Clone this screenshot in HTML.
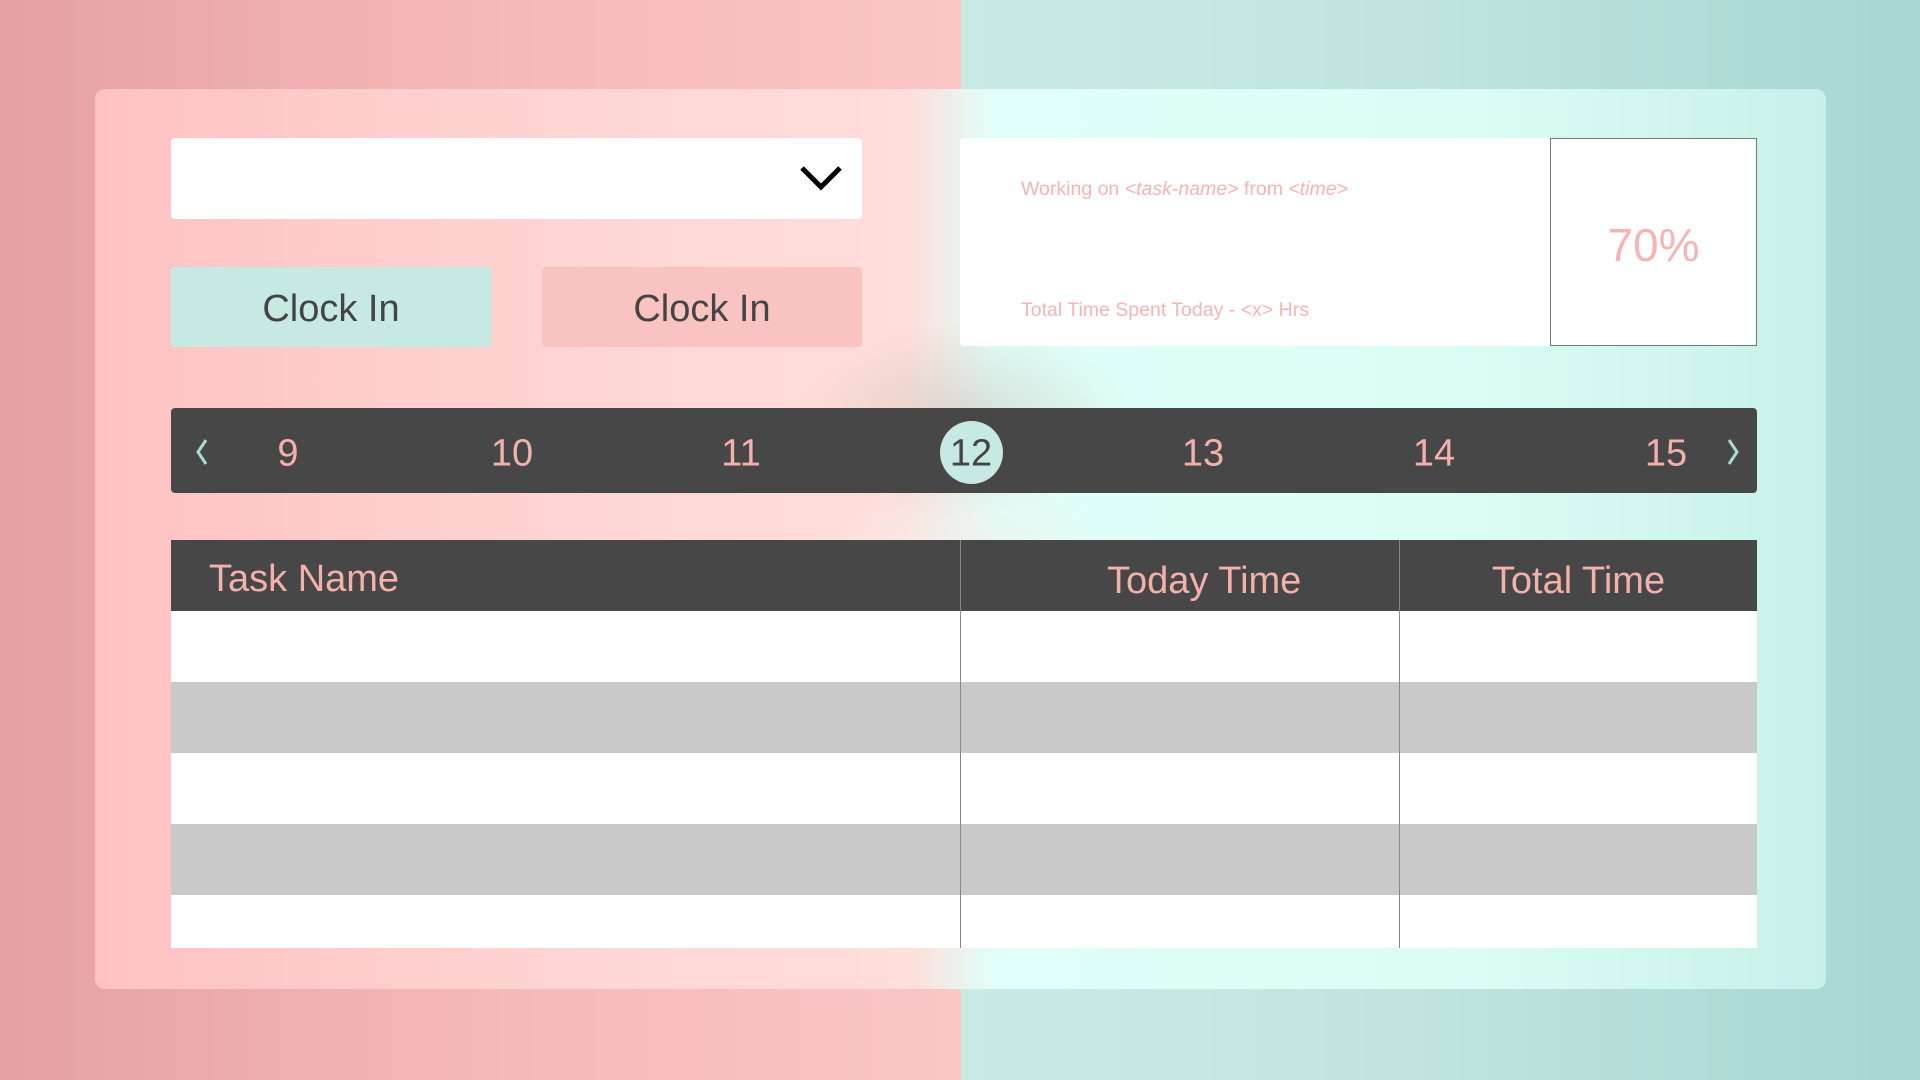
<!DOCTYPE html>
<html><head><meta charset="utf-8"><style>
*{margin:0;padding:0;box-sizing:border-box}
body{width:1920px;height:1080px;position:relative;overflow:hidden;font-family:"Liberation Sans","DejaVu Sans",sans-serif}
.bgl{position:absolute;left:0;top:0;width:961px;height:1080px;background:linear-gradient(90deg,#e6a0a2 0%,#f5b8b8 50%,#fcc6c6 100%)}
.bgr{position:absolute;left:961px;top:0;width:959px;height:1080px;background:linear-gradient(90deg,#c9ebe5 0%,#bfe4df 50%,#a6d6d0 100%)}
.card{position:absolute;left:95px;top:89px;width:1731px;height:900px;border-radius:10px;overflow:hidden;
background:linear-gradient(90deg,#ffc2c2 0%,#ffd6d6 30%,#ffdedb 47%,#e0fffa 52%,#dcfdf6 78%,#c8f0ea 100%)}
.blob{position:absolute;border-radius:50%}
.abs{position:absolute}
.dd{left:171px;top:138px;width:691px;height:81px;background:#fff;border-radius:4px}
.btn{top:267px;width:320px;height:80px;border-radius:4px;font-size:38px;color:#444;display:flex;align-items:center;justify-content:center;padding-top:4px}
.info{left:960px;top:138px;width:590px;height:208px;background:#fff;border-radius:4px 0 0 4px}
.info p{position:absolute;left:61px;color:#f6b4b4;font-size:19.5px}
.pct{left:1550px;top:138px;width:207px;height:208px;background:#fff;border:1px solid #777;color:#f6b4b4;font-size:46px;display:flex;align-items:center;justify-content:center;padding-top:6px}
.nav{left:171px;top:408px;width:1586px;height:85px;background:#474747;border-radius:4px}
.num{position:absolute;top:454px;transform:translate(-50%,-50%);color:#f4b0aa;font-size:38px}
.circ{position:absolute;left:940px;top:421px;width:63px;height:63px;border-radius:50%;background:#c6e9e3}
.th{top:540px;height:71px;background:#474747;color:#f4b0aa;font-size:38px}
.row{left:171px;width:1586px;height:71px}
.vl{position:absolute;top:540px;width:1px;height:408px;background:#888}
</style></head><body>
<div class="bgl"></div><div class="bgr"></div>
<div class="card">
<div class="blob" style="left:700px;top:230px;width:340px;height:200px;background:radial-gradient(ellipse,rgba(205,200,190,.6),rgba(220,215,205,0) 70%)"></div>
<div class="blob" style="left:720px;top:380px;width:300px;height:180px;background:radial-gradient(ellipse,rgba(240,240,235,.9),rgba(240,240,235,0) 70%)"></div>
</div>
<div class="abs dd"><svg class="abs" style="left:627px;top:26px" width="46" height="28" viewBox="0 0 46 28"><path d="M4 4 L23 23 L42 4" fill="none" stroke="#000" stroke-width="5"/></svg></div>
<div class="abs btn" style="left:171px;background:#c6e9e3">Clock In</div>
<div class="abs btn" style="left:542px;background:#f9c3c2">Clock In</div>
<div class="abs info"><p style="top:40px">Working on <i>&lt;task-name&gt;</i> from <i>&lt;time&gt;</i></p><p style="top:161px">Total Time Spent Today - &lt;x&gt; Hrs</p></div>
<div class="abs pct">70%</div>
<div class="abs nav"></div>
<svg class="abs" style="left:194px;top:437px" width="16" height="30" viewBox="0 0 16 30"><path d="M12 3 L4 15 L12 27" fill="none" stroke="#a8dcd4" stroke-width="3"/></svg>
<svg class="abs" style="left:1725px;top:437px" width="16" height="30" viewBox="0 0 16 30"><path d="M4 3 L12 15 L4 27" fill="none" stroke="#a8dcd4" stroke-width="3"/></svg>
<div class="circ"></div>
<div class="num" style="left:288px">9</div>
<div class="num" style="left:512px">10</div>
<div class="num" style="left:741px">11</div>
<div class="num" style="left:971px;color:#444">12</div>
<div class="num" style="left:1203px">13</div>
<div class="num" style="left:1434px">14</div>
<div class="num" style="left:1666px">15</div>
<div class="abs th" style="left:171px;width:1586px"></div>
<div class="abs" style="left:209px;top:558px;color:#f4b0aa;font-size:38px">Task Name</div>
<div class="abs" style="left:1107px;top:560px;color:#f4b0aa;font-size:38px">Today Time</div>
<div class="abs" style="left:1400px;width:357px;top:560px;text-align:center;color:#f4b0aa;font-size:38px">Total Time</div>
<div class="abs row" style="top:611px;background:#fff"></div>
<div class="abs row" style="top:682px;background:#c9c9c9"></div>
<div class="abs row" style="top:753px;background:#fff"></div>
<div class="abs row" style="top:824px;background:#c9c9c9"></div>
<div class="abs row" style="top:895px;height:53px;background:#fff"></div>
<div class="vl" style="left:960px"></div>
<div class="vl" style="left:1399px"></div>
</body></html>
